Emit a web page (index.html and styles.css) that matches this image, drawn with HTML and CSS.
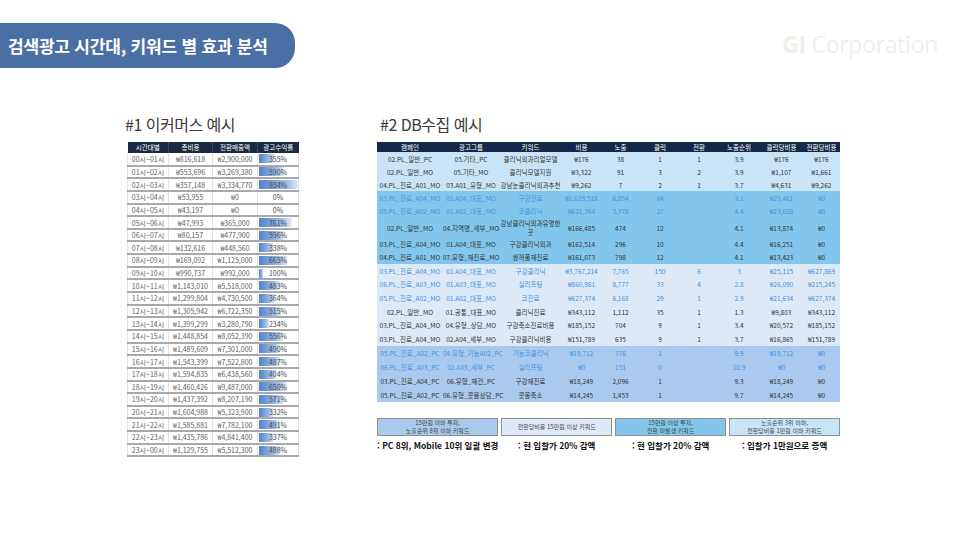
FILE: index.html
```html
<!DOCTYPE html>
<html lang="ko">
<head>
<meta charset="utf-8">
<title>검색광고 시간대, 키워드 별 효과 분석</title>
<link rel="stylesheet" href="styles.css">
</head>
<body>
<div class="page">
  <header class="top">
    <div class="pill"><h1 class="pill-title">검색광고 시간대, 키워드 별 효과 분석</h1></div>
    <div class="logo"><b>GI</b> Corporation</div>
  </header>

  <main class="content">
    <section class="sec sec1">
      <h2 class="sec-title">#1 이커머스 예시</h2>
      <table class="t1">
        <colgroup><col class="c1"><col class="c2"><col class="c3"><col class="c4"></colgroup>
        <thead><tr><th>시간대별</th><th>총비용</th><th>전환매출액</th><th>광고수익률</th></tr></thead>
        <tbody>
          <tr><td>00시~01시</td><td>₩816,618</td><td>₩2,900,000</td><td class="bar" style="--w:15.2px">355%</td></tr>
          <tr><td>01시~02시</td><td>₩553,696</td><td>₩3,269,380</td><td class="bar" style="--w:25.3px">590%</td></tr>
          <tr><td>02시~03시</td><td>₩357,148</td><td>₩3,334,770</td><td class="bar" style="--w:40px">934%</td></tr>
          <tr><td>03시~04시</td><td>₩53,955</td><td>₩0</td><td class="bar" style="--w:0px">0%</td></tr>
          <tr><td>04시~05시</td><td>₩43,197</td><td>₩0</td><td class="bar" style="--w:0px">0%</td></tr>
          <tr><td>05시~06시</td><td>₩47,993</td><td>₩365,000</td><td class="bar" style="--w:32.6px">761%</td></tr>
          <tr><td>06시~07시</td><td>₩80,157</td><td>₩477,900</td><td class="bar" style="--w:25.5px">596%</td></tr>
          <tr><td>07시~08시</td><td>₩132,616</td><td>₩448,560</td><td class="bar" style="--w:14.5px">338%</td></tr>
          <tr><td>08시~09시</td><td>₩169,092</td><td>₩1,125,000</td><td class="bar" style="--w:28.5px">665%</td></tr>
          <tr><td>09시~10시</td><td>₩990,737</td><td>₩992,000</td><td class="bar" style="--w:4.3px">100%</td></tr>
          <tr><td>10시~11시</td><td>₩1,143,010</td><td>₩5,518,000</td><td class="bar" style="--w:20.7px">483%</td></tr>
          <tr><td>11시~12시</td><td>₩1,299,804</td><td>₩4,730,500</td><td class="bar" style="--w:15.6px">364%</td></tr>
          <tr><td>12시~13시</td><td>₩1,305,942</td><td>₩6,722,350</td><td class="bar" style="--w:22.1px">515%</td></tr>
          <tr><td>13시~14시</td><td>₩1,399,299</td><td>₩3,280,790</td><td class="bar" style="--w:10px">234%</td></tr>
          <tr><td>14시~15시</td><td>₩1,448,854</td><td>₩8,052,390</td><td class="bar" style="--w:23.8px">556%</td></tr>
          <tr><td>15시~16시</td><td>₩1,489,609</td><td>₩7,301,000</td><td class="bar" style="--w:21px">490%</td></tr>
          <tr><td>16시~17시</td><td>₩1,543,399</td><td>₩7,522,800</td><td class="bar" style="--w:20.9px">487%</td></tr>
          <tr><td>17시~18시</td><td>₩1,594,835</td><td>₩6,438,560</td><td class="bar" style="--w:17.3px">404%</td></tr>
          <tr><td>18시~19시</td><td>₩1,460,426</td><td>₩9,487,000</td><td class="bar" style="--w:27.8px">650%</td></tr>
          <tr><td>19시~20시</td><td>₩1,437,392</td><td>₩8,207,190</td><td class="bar" style="--w:24.5px">571%</td></tr>
          <tr><td>20시~21시</td><td>₩1,604,988</td><td>₩5,323,900</td><td class="bar" style="--w:14.2px">332%</td></tr>
          <tr><td>21시~22시</td><td>₩1,585,881</td><td>₩7,782,100</td><td class="bar" style="--w:21px">491%</td></tr>
          <tr><td>22시~23시</td><td>₩1,435,786</td><td>₩4,841,400</td><td class="bar" style="--w:14.4px">337%</td></tr>
          <tr><td>23시~00시</td><td>₩1,129,755</td><td>₩5,512,300</td><td class="bar" style="--w:20.9px">488%</td></tr>
        </tbody>
      </table>
    </section>

    <section class="sec sec2">
      <h2 class="sec-title t2-title">#2 DB수집 예시</h2>
      <table class="t2">
        <colgroup>
          <col class="d1"><col class="d2"><col class="d3"><col class="d4"><col class="d5">
          <col class="d6"><col class="d7"><col class="d8"><col class="d9"><col class="d10">
        </colgroup>
        <thead><tr><th>캠페인</th><th>광고그룹</th><th>키워드</th><th>비용</th><th>노출</th><th>클릭</th><th>전환</th><th>노출순위</th><th>클릭당비용</th><th>전환당비용</th></tr></thead>
        <tbody class="g1">
          <tr><td>02.PL_일반_PC</td><td>05.기타_PC</td><td>클리닉외과리얼모델</td><td>₩176</td><td>38</td><td>1</td><td>1</td><td>3.9</td><td>₩176</td><td>₩176</td></tr>
          <tr><td>02.PL_일반_MO</td><td>05.기타_MO</td><td>클리닉모델지원</td><td>₩3,322</td><td>91</td><td>3</td><td>2</td><td>3.9</td><td>₩1,107</td><td>₩1,661</td></tr>
          <tr><td>04.PL_진료_A01_MO</td><td>03.A01_유형_MO</td><td>강남눈클리닉외과추천</td><td>₩9,262</td><td>7</td><td>2</td><td>1</td><td>3.7</td><td>₩4,631</td><td>₩9,262</td></tr>
        </tbody>
        <tbody class="g2">
          <tr class="hl"><td>03.PL_진료_A04_MO</td><td>01.A04_대표_MO</td><td>구강진료</td><td>₩1,629,518</td><td>6,854</td><td>64</td><td></td><td>3.1</td><td>₩25,461</td><td>₩0</td></tr>
          <tr class="hl"><td>05.PL_진료_A02_MO</td><td>01.A02_대표_MO</td><td>코클리닉</td><td>₩621,764</td><td>5,378</td><td>27</td><td></td><td>4.4</td><td>₩23,028</td><td>₩0</td></tr>
          <tr class="tall"><td>02.PL_일반_MO</td><td>04.지역명_세부_MO</td><td><span class="wrap"><span>강남클리닉외과유명한</span><span>곳</span></span></td><td>₩166,485</td><td>474</td><td>12</td><td></td><td>4.1</td><td>₩13,874</td><td>₩0</td></tr>
          <tr><td>03.PL_진료_A04_MO</td><td>01.A04_대표_MO</td><td>구강클리닉외과</td><td>₩162,514</td><td>296</td><td>10</td><td></td><td>4.4</td><td>₩16,251</td><td>₩0</td></tr>
          <tr><td>04.PL_진료_A01_MO</td><td>07.유형_재진료_MO</td><td>쌍꺼풀재진료</td><td>₩161,073</td><td>798</td><td>12</td><td></td><td>4.1</td><td>₩13,423</td><td>₩0</td></tr>
        </tbody>
        <tbody class="g3">
          <tr class="hl"><td>03.PL_진료_A04_MO</td><td>01.A04_대표_MO</td><td>구강클리닉</td><td>₩3,767,214</td><td>7,765</td><td>150</td><td>6</td><td>3</td><td>₩25,115</td><td>₩627,869</td></tr>
          <tr class="hl"><td>06.PL_진료_A03_MO</td><td>01.A03_대표_MO</td><td>실리프팅</td><td>₩860,981</td><td>8,777</td><td>33</td><td>4</td><td>2.8</td><td>₩26,090</td><td>₩215,245</td></tr>
          <tr class="hl"><td>05.PL_진료_A02_MO</td><td>01.A02_대표_MO</td><td>코진료</td><td>₩627,374</td><td>6,168</td><td>29</td><td>1</td><td>2.9</td><td>₩21,634</td><td>₩627,374</td></tr>
          <tr><td>02.PL_일반_MO</td><td>01.공통_대표_MO</td><td>클리닉진료</td><td>₩343,112</td><td>1,112</td><td>35</td><td>1</td><td>1.3</td><td>₩9,803</td><td>₩343,112</td></tr>
          <tr><td>03.PL_진료_A04_MO</td><td>04.유형_상담_MO</td><td>구강축소진료비용</td><td>₩185,152</td><td>704</td><td>9</td><td>1</td><td>3.4</td><td>₩20,572</td><td>₩185,152</td></tr>
          <tr><td>03.PL_진료_A04_MO</td><td>02.A04_세부_MO</td><td>구강클리닉비용</td><td>₩151,789</td><td>635</td><td>9</td><td>1</td><td>3.7</td><td>₩16,865</td><td>₩151,789</td></tr>
        </tbody>
        <tbody class="g4">
          <tr class="hl"><td>05.PL_진료_A02_PC</td><td>04.유형_기능A02_PC</td><td>기능코클리닉</td><td>₩19,712</td><td>776</td><td>1</td><td></td><td>9.9</td><td>₩19,712</td><td>₩0</td></tr>
          <tr class="hl"><td>06.PL_진료_A03_PC</td><td>02.A03_세부_PC</td><td>실리프팅</td><td>₩0</td><td>151</td><td>0</td><td></td><td>10.9</td><td>₩0</td><td>₩0</td></tr>
          <tr><td>03.PL_진료_A04_PC</td><td>06.유형_재건_PC</td><td>구강재진료</td><td>₩18,249</td><td>2,096</td><td>1</td><td></td><td>9.3</td><td>₩18,249</td><td>₩0</td></tr>
          <tr><td>05.PL_진료_A02_PC</td><td>06.유형_콧볼상담_PC</td><td>콧볼축소</td><td>₩14,245</td><td>1,453</td><td>1</td><td></td><td>9.7</td><td>₩14,245</td><td>₩0</td></tr>
        </tbody>
      </table>

      <div class="legend">
        <div class="item">
          <div class="box b4"><span>15만원 이하 투자,</span><span>노출순위 8위 이하 키워드</span></div>
          <p class="cap">: PC 8위, Mobile 10위 일괄 변경</p>
        </div>
        <div class="item">
          <div class="box b3"><span>전환당비용 15만원 이상 키워드</span></div>
          <p class="cap">: 현 입찰가 20% 감액</p>
        </div>
        <div class="item">
          <div class="box b2"><span>15만원 이상 투자,</span><span>전환 미발생 키워드</span></div>
          <p class="cap">: 현 입찰가 20% 감액</p>
        </div>
        <div class="item">
          <div class="box b1"><span>노출순위 3위 이하,</span><span>전환당비용 1만원 이하 키워드</span></div>
          <p class="cap">: 입찰가 1만원으로 증액</p>
        </div>
      </div>
    </section>
  </main>
</div>
</body>
</html>
```
FILE: styles.css
```css
* { box-sizing: border-box; }
html, body { margin: 0; padding: 0; background: #ffffff; }
body {
  font-family: "Noto Sans CJK KR", "Noto Sans", sans-serif;
  color: #333;
}
.page { width: 966px; height: 543px; overflow: hidden; }

.top {
  display: flex;
  justify-content: space-between;
  align-items: center;
  padding-top: 23px;
  padding-right: 28px;
}
.pill {
  width: 295px;
  height: 45px;
  background: #4a6fa5;
  border-radius: 0 20px 20px 0;
  display: flex;
  align-items: center;
  padding-left: 8px;
}
.pill-title {
  margin: 0;
  font-size: 17px;
  font-weight: 700;
  color: #ffffff;
  letter-spacing: -0.2px;
  line-height: 1;
}
.logo {
  font-family: "Open Sans", "Noto Sans", sans-serif;
  font-size: 23px;
  color: #f1eee8;
  letter-spacing: -0.3px;
  line-height: 1;
  margin-top: -2px;
}
.logo b { font-weight: 700; }

.content {
  display: flex;
  padding-left: 125px;
  margin-top: 46px;
}
.sec1 { width: 252px; }
.sec2 { width: 463px; }

.sec-title {
  margin: 0 0 8px 0;
  font-size: 16px;
  font-weight: 400;
  line-height: 20px;
  color: #3a3a3a;
  letter-spacing: -0.5px;
}
.t2-title { padding-left: 3px; }

/* table 1 */
.t1 {
  margin-left: 2px;
  width: 171px;
  table-layout: fixed;
  border-collapse: collapse;
  font-size: 7px;
  color: #5e5e5e;
}
.t1 .c1 { width: 41px; }
.t1 .c2 { width: 44px; }
.t1 .c3 { width: 45px; }
.t1 .c4 { width: 41px; }
.t1 th {
  background: #1b2a42;
  color: #ffffff;
  font-weight: 400;
  font-size: 6.5px;
  height: 11px;
  padding: 0;
  line-height: 11px;
  border-right: 1px solid #3a4a62;
}
.t1 th:last-child { border-right: 0; }
.t1 td {
  height: 12.65px;
  padding: 0;
  text-align: center;
  line-height: 10px;
  white-space: nowrap;
  border-bottom: 2px solid #a9a9a9;
  border-right: 1px solid #e3e3e3;
}
.t1 td:first-child { border-left: 1px solid #e3e3e3; }
.t1 td.bar {
  background-image: linear-gradient(to right, #5283cc, #9dbbe6 70%, #e3ecf8);
  background-repeat: no-repeat;
  background-size: var(--w) 9px;
  background-position: 1px center;
  color: #4a4a4a;
}

/* table 2 */
.t2 {
  width: 463px;
  table-layout: fixed;
  border-collapse: collapse;
  font-size: 6.5px;
  color: #333;
}
.t2 .d1 { width: 66px; }
.t2 .d2 { width: 56px; }
.t2 .d3 { width: 63px; }
.t2 .d4 { width: 39px; }
.t2 .d5 { width: 39px; }
.t2 .d6 { width: 40px; }
.t2 .d7 { width: 38px; }
.t2 .d8 { width: 42px; }
.t2 .d9 { width: 43px; }
.t2 .d10 { width: 37px; }
.t2 th {
  background: #15284a;
  color: #ffffff;
  font-weight: 400;
  height: 10px;
  line-height: 10px;
  padding: 0;
}
.t2 td {
  padding: 0;
  text-align: center;
  white-space: nowrap;
  line-height: 8px;
}
.t2 .g1 td { height: 13px; }
.t2 .g2 td { height: 13.5px; }
.t2 .g2 .tall td { height: 19px; }
.t2 .wrap { display: flex; flex-direction: column; align-items: center; gap: 1px; }
.t2 .wrap span { display: block; line-height: 8px; }
.t2 .g3 td { height: 13.67px; }
.t2 .g4 td { height: 14px; }
.g1 { background: #c8e5f7; }
.g2 { background: #82c7eb; }
.g3 { background: #dde9f6; }
.g4 { background: #a9caee; }
.t2 tr.hl td { color: #3f92dc; }

/* legend */
.legend {
  display: grid;
  grid-template-columns: repeat(4, 1fr);
  column-gap: 3px;
  margin-top: 16px;
}
.box {
  height: 18px;
  border: 1px solid #8f8f8f;
  font-size: 6px;
  line-height: 8px;
  color: #444;
  text-align: center;
  display: flex;
  flex-direction: column;
  align-items: center;
  justify-content: center;
}
.box span { display: block; white-space: nowrap; }
.b1 { background: #c8e5f7; }
.b2 { background: #82c7eb; }
.b3 { background: #dde9f6; }
.b4 { background: #a9caee; }
.cap {
  margin: 4px 0 0 0;
  font-size: 8.5px;
  font-weight: 700;
  line-height: 11px;
  color: #111;
  text-align: center;
  white-space: nowrap;
}
```
